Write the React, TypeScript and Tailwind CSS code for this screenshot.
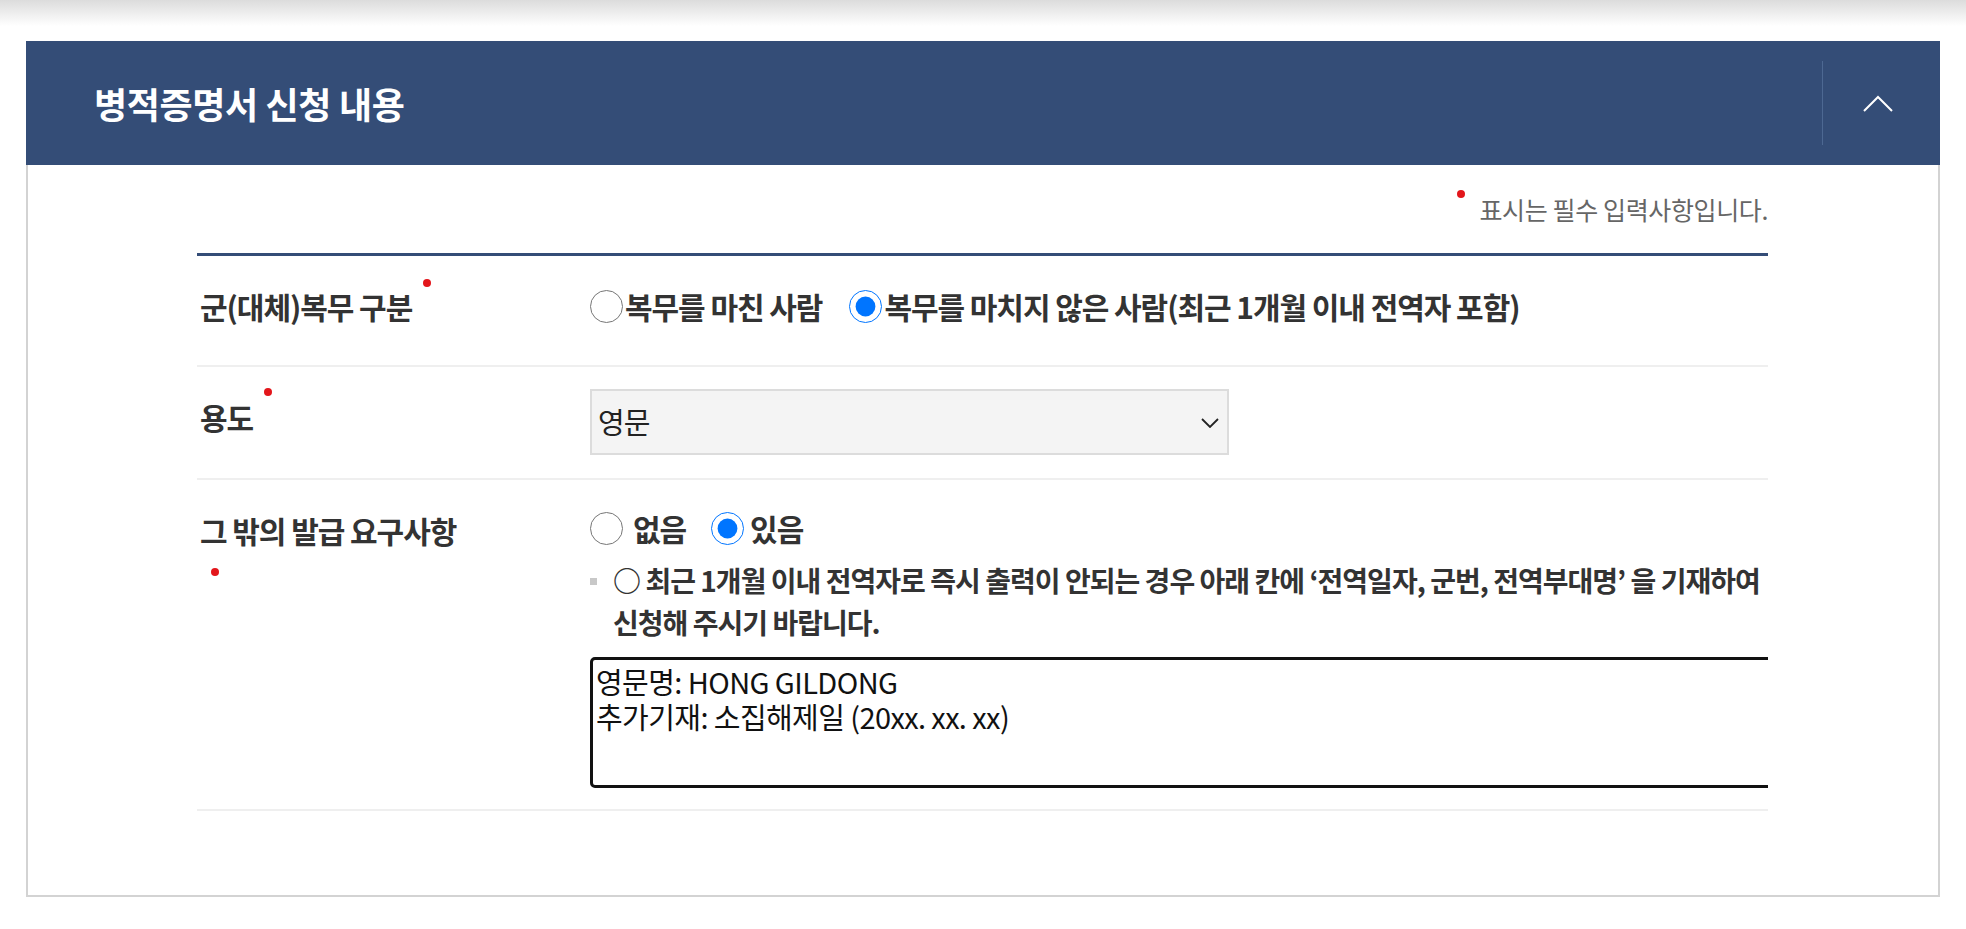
import React from "react";

function Req({ className = "" }: { className?: string }) {
  return <span className={"inline-block h-[8px] w-[8px] rounded-full bg-[#e3161b] " + className} />;
}

function Radio({ checked, name }: { checked?: boolean; name: string }) {
  return (
    <input
      type="radio"
      name={name}
      defaultChecked={checked}
      className="m-0 h-[33px] w-[33px] shrink-0"
    />
  );
}

export default function App() {
  return (
    <div className="min-h-[929px] bg-white font-['Noto_Sans_CJK_KR','Noto_Sans',sans-serif] text-[#333]">
      {/* 상단 그림자 */}
      <div className="h-[26px] bg-linear-to-b from-[#dcdcdc] to-white" />

      <section className="mx-[26px] mt-[15px]">
        {/* 헤더 */}
        <div className="flex h-[124px] items-center bg-[#344d77]">
          <h2 className="flex-1 pl-[68px] text-[36px] font-bold tracking-[-0.01em] text-white">
            병적증명서 신청 내용
          </h2>
          <div className="h-[84px] w-px bg-[#4d6892]" />
          <button className="flex h-full w-[117px] items-center justify-center pr-[8px]">
            <svg width="30" height="17" viewBox="0 0 30 17" fill="none">
              <polyline points="1,16 15,2 29,16" stroke="white" strokeWidth="2" />
            </svg>
          </button>
        </div>

        {/* 본문 */}
        <div className="border-x-2 border-b-2 border-[#d3d3d3] pb-[84px] pl-[169px] pr-[170px] pt-[28px]">
          <div className="flex items-start justify-end">
            <Req className="mr-[14px] -mt-[3px]" />
            <p className="text-[25px] leading-[32px] tracking-[-0.015em] text-[#666]">표시는 필수 입력사항입니다.</p>
          </div>

          <div className="mt-[28px] overflow-hidden border-t-[3px] border-[#344d77]">
            {/* 군(대체)복무 구분 */}
            <div className="flex border-b-2 border-[#efefef]">
              <div className="w-[393px] shrink-0 pl-[3px] pt-[18px]">
                <div className="max-w-[262px] text-[30px] font-bold leading-[64px] tracking-[-0.035em]">
                  군(대체)복무 구분
                  <Req className="ml-[11px] mt-[5px] align-top" />
                </div>
              </div>
              <div className="flex-1 pb-[31px] pt-[22px]">
                <div className="flex h-[56px] items-center whitespace-nowrap text-[30px] font-bold tracking-[-0.035em]">
                  <label className="flex items-center">
                    <Radio name="svc" />
                    <span className="ml-[2px]">복무를 마친 사람</span>
                  </label>
                  <label className="ml-[27px] flex items-center">
                    <Radio name="svc" checked />
                    <span className="ml-[2px]">복무를 마치지 않은 사람(최근 1개월 이내 전역자 포함)</span>
                  </label>
                </div>
              </div>
            </div>

            {/* 용도 */}
            <div className="flex border-b-2 border-[#efefef]">
              <div className="w-[393px] shrink-0 pl-[3px] pt-[18px]">
                <div className="max-w-[262px] text-[30px] font-bold leading-[64px] tracking-[-0.035em]">
                  용도
                  <Req className="ml-[11px] mt-[3px] align-top" />
                </div>
              </div>
              <div className="flex-1 pb-[23px] pt-[22px]">
                <div className="relative w-[639px]">
                  <select
                    defaultValue="en"
                    className="h-[66px] w-full appearance-none border-2 border-[#dcdcdc] bg-[#f4f4f4] pl-[6px] text-[29px] tracking-[-0.03em] text-[#222] outline-none"
                  >
                    <option value="en">영문</option>
                    <option value="ko">국문</option>
                  </select>
                  <svg
                    className="pointer-events-none absolute right-[10px] top-[29px]"
                    width="18"
                    height="10"
                    viewBox="0 0 18 10"
                    fill="none"
                  >
                    <polyline points="1,1 9,9 17,1" stroke="#222" strokeWidth="1.8" />
                  </svg>
                </div>
              </div>
            </div>

            {/* 그 밖의 발급 요구사항 */}
            <div className="flex border-b-2 border-[#efefef]">
              <div className="w-[393px] shrink-0 pl-[3px] pt-[18px]">
                <div className="max-w-[262px] text-[30px] font-bold leading-[64px] tracking-[-0.035em]">
                  그 밖의 발급 요구사항
                  <Req className="ml-[11px] mt-[6px] align-top" />
                </div>
              </div>
              <div className="min-w-0 flex-1 pb-[21px] pt-[20px]">
                <div className="flex h-[56px] items-center whitespace-nowrap text-[30px] font-bold tracking-[-0.035em]">
                  <label className="flex items-center">
                    <Radio name="etc" />
                    <span className="ml-[10px]">없음</span>
                  </label>
                  <label className="ml-[25px] flex items-center">
                    <Radio name="etc" checked />
                    <span className="ml-[6px]">있음</span>
                  </label>
                </div>
                <div className="mt-[3px] flex items-start">
                  <span className="mt-[19px] h-[7px] w-[7px] shrink-0 bg-[#c8c8c8]" />
                  <p className="ml-[16px] whitespace-nowrap text-[28px] font-bold leading-[42px] tracking-[-0.035em]">
                    ○ 최근 1개월 이내 전역자로 즉시 출력이 안되는 경우 아래 칸에 ‘전역일자, 군번, 전역부대명’ 을 기재하여
                    <br />
                    신청해 주시기 바랍니다.
                  </p>
                </div>
                <textarea
                  defaultValue={"영문명: HONG GILDONG\n추가기재: 소집해제일 (20xx. xx. xx)"}
                  className="mt-[14px] block h-[131px] w-[1300px] resize-none rounded-[5px] border-[3px] border-[#111] px-[3px] pt-[4px] text-[29px] leading-[35px] tracking-[-0.02em] text-[#111] outline-none"
                />
              </div>
            </div>
          </div>
        </div>
      </section>
    </div>
  );
}
